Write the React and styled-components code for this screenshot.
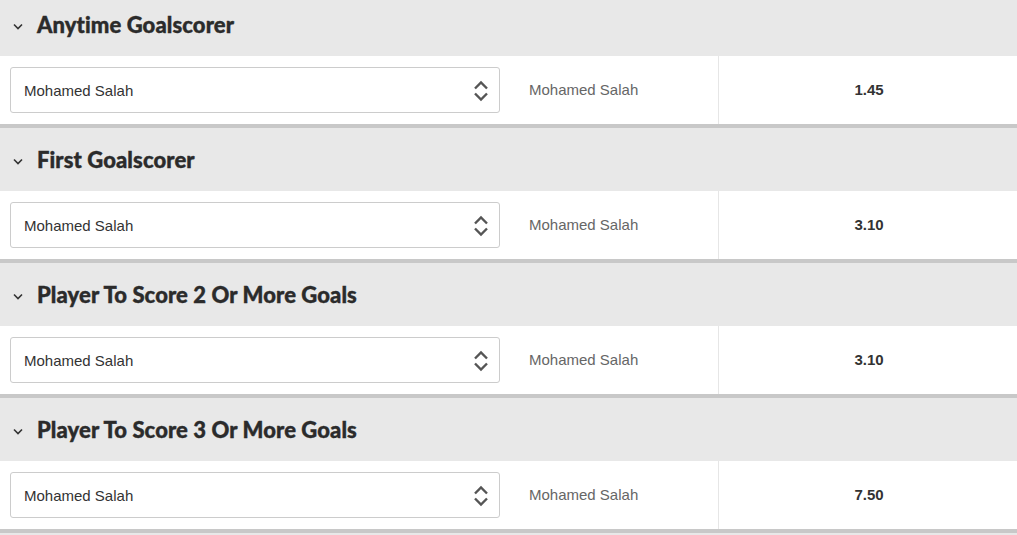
import React from 'react';
import styled, { createGlobalStyle } from 'styled-components';

const markets = [
  { title: 'Anytime Goalscorer', player: 'Mohamed Salah', price: '1.45' },
  { title: 'First Goalscorer', player: 'Mohamed Salah', price: '3.10' },
  { title: 'Player To Score 2 Or More Goals', player: 'Mohamed Salah', price: '3.10' },
  { title: 'Player To Score 3 Or More Goals', player: 'Mohamed Salah', price: '7.50' },
];

const GlobalStyle = createGlobalStyle`
  html, body {
    margin: 0;
    padding: 0;
    background: #e8e8e8;
    overflow: hidden;
  }
  body {
    font-family: "Liberation Sans", Arial, sans-serif;
  }
`;

const Page = styled.div`
  margin-top: -7px;
`;

const Market = styled.section`
  border-bottom: 4px solid #c8c8c8;
`;

const Header = styled.div`
  display: flex;
  align-items: center;
  height: 63px;
  background: #e8e8e8;
  padding-left: 13px;
  box-sizing: border-box;
`;

const Toggle = styled.svg`
  width: 10px;
  height: 7px;
  margin-right: 14px;
  margin-top: 3px;
`;

const Title = styled.h2`
  margin: 0;
  font-family: Lato, "Noto Sans", sans-serif;
  font-weight: 900;
  font-size: 22px;
  color: #2b2b2b;
  -webkit-text-stroke: 0.4px #2b2b2b;
  letter-spacing: 0.1px;
`;

const Row = styled.div`
  display: grid;
  grid-template-columns: 500px 219px 1fr;
  height: 68px;
  background: #fff;
`;

const SelectCell = styled.div`
  padding: 11px 0 0 10px;
`;

const SelectBox = styled.div`
  display: flex;
  align-items: center;
  justify-content: space-between;
  height: 46px;
  box-sizing: border-box;
  border: 1px solid #cccccc;
  border-radius: 3px;
  padding: 1px 10px 0 13px;
  font-size: 15px;
  color: #333;
`;

const Player = styled.div`
  display: flex;
  align-items: center;
  padding-left: 29px;
  padding-bottom: 2px;
  font-size: 15px;
  color: #666;
  border-right: 1px solid #e6e6e6;
`;

const Price = styled.div`
  display: flex;
  align-items: center;
  justify-content: center;
  padding-bottom: 2px;
  padding-left: 2px;
  font-size: 15px;
  font-weight: 700;
  color: #333;
`;

const Updown = () => (
  <svg width="16" height="22" viewBox="0 0 16 22" fill="none">
    <path d="M2 8.5 L8 2.5 L14 8.5" stroke="#555" strokeWidth="2.4" />
    <path d="M2 13.5 L8 19.5 L14 13.5" stroke="#555" strokeWidth="2.4" />
  </svg>
);

export default function App() {
  return (
    <>
      <GlobalStyle />
      <Page>
        {markets.map((m) => (
          <Market key={m.title}>
            <Header>
              <Toggle viewBox="0 0 10 7" fill="none">
                <path d="M1 1.5 L5 5.5 L9 1.5" stroke="#333" strokeWidth="1.6" />
              </Toggle>
              <Title>{m.title}</Title>
            </Header>
            <Row>
              <SelectCell>
                <SelectBox>
                  <span>{m.player}</span>
                  <Updown />
                </SelectBox>
              </SelectCell>
              <Player>{m.player}</Player>
              <Price>{m.price}</Price>
            </Row>
          </Market>
        ))}
      </Page>
    </>
  );
}
